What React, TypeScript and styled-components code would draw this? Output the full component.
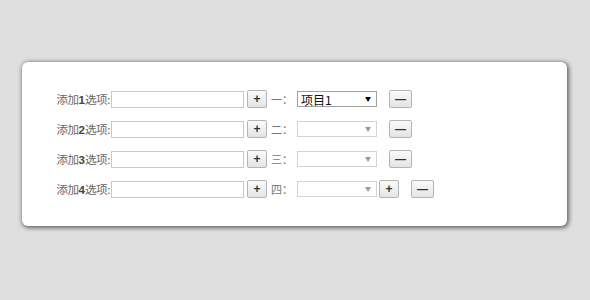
import React from "react";
import styled, { createGlobalStyle } from "styled-components";

const GlobalStyle = createGlobalStyle`
  html, body {
    margin: 0;
    padding: 0;
    background: #dfdfdf;
  }
  body {
    font-family: "Noto Sans CJK SC", "Liberation Sans", sans-serif;
  }
`;

const Page = styled.div`
  width: 590px;
  height: 300px;
  padding-top: 62px;
  box-sizing: border-box;
`;

const Card = styled.div`
  width: 545px;
  height: 164px;
  margin-left: 22px;
  background: #fff;
  border-radius: 6px;
  box-shadow: 1px 1px 4px 1px rgba(0, 0, 0, 0.55);
  padding: 28px 0 0 32px;
  box-sizing: border-box;
  display: flex;
  flex-direction: column;
  gap: 12px;
`;

const Row = styled.div`
  display: flex;
  align-items: center;
  height: 18px;
`;

const Label = styled.span`
  font-size: 11.5px;
  letter-spacing: -0.4px;
  color: #666;
  width: 57px;
  flex-shrink: 0;
  text-align: right;
  white-space: nowrap;
  padding-right: 1px;
  box-sizing: border-box;
  b {
    font-family: "Liberation Sans", sans-serif;
    font-weight: bold;
    color: #444;
    letter-spacing: 0;
  }
`;

const TextInput = styled.input`
  width: 133px;
  height: 17px;
  box-sizing: border-box;
  border: 1px solid #c8c8c8;
  border-radius: 0;
  padding: 0 3px;
  margin: 0;
  outline: none;
`;

const Btn = styled.button<{ $wide?: boolean; $gapLeft?: number }>`
  width: ${(p) => (p.$wide ? 23 : 20)}px;
  height: 18px;
  margin: 0 0 0 ${(p) => p.$gapLeft ?? 0}px;
  padding: 0;
  box-sizing: border-box;
  border: 1px solid #b4b4b4;
  border-radius: 2px;
  background: linear-gradient(#fbfbfb, #e4e4e4);
  font-family: "Liberation Sans", sans-serif;
  font-size: ${(p) => (p.$wide ? 11 : 12)}px;
  font-weight: bold;
  color: #333;
  line-height: 16px;
  display: flex;
  align-items: center;
  justify-content: center;
`;

const Ordinal = styled.span`
  font-size: 11px;
  color: #777;
  margin: 0 6px 0 4px;
  width: 20px;
  white-space: nowrap;
`;

const SelectBox = styled.div<{ $disabled?: boolean }>`
  position: relative;
  width: 80px;
  height: 16px;
  box-sizing: border-box;
  border: 1px solid ${(p) => (p.$disabled ? "#d4d4d4" : "#a0a0a0")};
  background: #fff;
  display: flex;
  align-items: center;
  padding-left: 3px;
  font-size: 12px;
  color: #111;
`;

const Arrow = styled.span<{ $disabled?: boolean }>`
  position: absolute;
  right: 5px;
  top: 3px;
  font-size: 6px;
  line-height: 8px;
  color: ${(p) => (p.$disabled ? "#999" : "#000")};
`;

const rows = [
  { n: "1", ord: "一", value: "项目1", extra: false },
  { n: "2", ord: "二", value: "", extra: false },
  { n: "3", ord: "三", value: "", extra: false },
  { n: "4", ord: "四", value: "", extra: true },
];

export default function App() {
  return (
    <Page>
      <GlobalStyle />
      <Card>
        {rows.map((r) => (
          <Row key={r.n}>
            <Label>
              添加<b>{r.n}</b>选项:
            </Label>
            <TextInput />
            <Btn $gapLeft={3}>+</Btn>
            <Ordinal>{r.ord}：</Ordinal>
            <SelectBox $disabled={!r.value}>
              {r.value}
              <Arrow $disabled={!r.value}>▼</Arrow>
            </SelectBox>
            {r.extra && <Btn $gapLeft={2}>+</Btn>}
            <Btn $wide $gapLeft={12}>—</Btn>
          </Row>
        ))}
      </Card>
    </Page>
  );
}
